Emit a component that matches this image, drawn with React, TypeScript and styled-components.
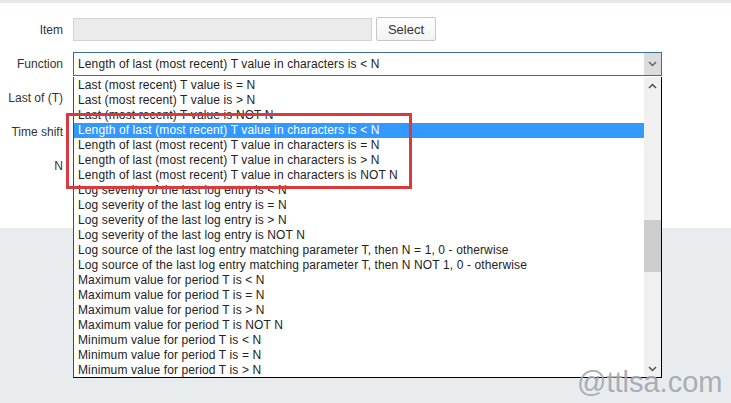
import React from "react";
import styled, { createGlobalStyle } from "styled-components";

const Global = createGlobalStyle`
  html, body { margin: 0; padding: 0; }
  body {
    background: #e9ecef;
    font-family: "Liberation Sans", Arial, sans-serif;
    font-size: 12px;
    color: #333;
  }
`;

const Page = styled.div`
  position: relative;
  width: 731px;
  height: 403px;
  overflow: hidden;
  display: flex;
  flex-direction: column;
`;

const TopStrip = styled.div`
  height: 3px;
  background: #e6e7e8;
`;

const Panel = styled.div`
  height: 225px;
  background: #fff;
  padding-top: 15px;
  box-sizing: border-box;
`;

const Form = styled.div`
  position: relative;
  display: grid;
  grid-template-columns: 63px 1fr;
  grid-auto-rows: 24px;
  column-gap: 10px;
  row-gap: 10px;
`;

const Label = styled.div`
  display: flex;
  align-items: center;
  justify-content: flex-end;
  font-size: 12px;
  color: #333;
`;

const Field = styled.div`
  display: flex;
  align-items: stretch;
  gap: 4px;
`;

const ItemInput = styled.div`
  width: 299px;
  height: 23px;
  box-sizing: border-box;
  background: #ebebeb;
  border: 1px solid #d2d2d2;
`;

const Button = styled.button`
  width: 60px;
  height: 24px;
  box-sizing: border-box;
  background: linear-gradient(#fdfdfd, #f3f3f3);
  border: 1px solid #c6c6c6;
  border-radius: 2px;
  font-family: "Liberation Sans", Arial, sans-serif;
  font-size: 13px;
  color: #333;
  padding: 0;
  margin-top: -1px;
`;

const SelectBox = styled.div`
  width: 589px;
  height: 24px;
  box-sizing: border-box;
  border: 1px solid #3d6f8f;
  display: flex;
  align-items: stretch;
  background: #fff;
`;

const SelectText = styled.div`
  flex: 1;
  display: flex;
  align-items: center;
  padding-left: 4px;
  font-size: 12px;
  letter-spacing: 0.12px;
  color: #222;
  white-space: nowrap;
`;

const ArrowBox = styled.div`
  width: 17px;
  background: #dcdcdc;
  display: flex;
  align-items: center;
  justify-content: center;
`;

const Dropdown = styled.div`
  position: absolute;
  left: 73px;
  top: 59px;
  width: 589px;
  height: 301px;
  box-sizing: border-box;
  background: #fff;
  border-left: 1px solid #4a4a4a;
  border-right: 1px solid #000;
  border-bottom: 1px solid #000;
  display: grid;
  grid-template-columns: 1fr 17px;
  padding-top: 1px;
`;

const Options = styled.div`
  display: flex;
  flex-direction: column;
  overflow: hidden;
`;

const Option = styled.div<{ $active?: boolean }>`
  height: 15px;
  line-height: 15px;
  padding-left: 4px;
  font-size: 12px;
  letter-spacing: 0.12px;
  white-space: nowrap;
  flex-shrink: 0;
  color: ${(p) => (p.$active ? "#fff" : "#222")};
  background: ${(p) => (p.$active ? "#3399ff" : "transparent")};
`;

const Scrollbar = styled.div`
  display: flex;
  flex-direction: column;
  background: #f0f0f0;
  margin-top: -1px;
`;

const ScrollArrow = styled.div`
  height: 17px;
  display: flex;
  align-items: center;
  justify-content: center;
  flex-shrink: 0;
`;

const Track = styled.div`
  flex: 1;
  display: flex;
  flex-direction: column;
`;

const Thumb = styled.div`
  height: 52px;
  background: #cdcdcd;
`;

const Highlight = styled.div`
  position: absolute;
  left: 66px;
  top: 95px;
  width: 346px;
  height: 76px;
  box-sizing: border-box;
  border: 3px solid #d83a3d;
  pointer-events: none;
`;

const Watermark = styled.div`
  position: absolute;
  left: 577px;
  top: 368px;
  font-family: "Liberation Sans", Arial, sans-serif;
  font-size: 29px;
  line-height: 29px;
  color: #a2a7b0;
  opacity: 0.9;
  pointer-events: none;
`;

const Chevron = ({ up, color = "#555" }: { up?: boolean; color?: string }) => (
  <svg width="9" height="6" viewBox="0 0 9 6">
    <path
      d={up ? "M1 5 L4.5 1.5 L8 5" : "M1 1 L4.5 4.5 L8 1"}
      fill="none"
      stroke={color}
      strokeWidth="1.5"
    />
  </svg>
);

const options = [
  "Last (most recent) T value is = N",
  "Last (most recent) T value is > N",
  "Last (most recent) T value is NOT N",
  "Length of last (most recent) T value in characters is < N",
  "Length of last (most recent) T value in characters is = N",
  "Length of last (most recent) T value in characters is > N",
  "Length of last (most recent) T value in characters is NOT N",
  "Log severity of the last log entry is < N",
  "Log severity of the last log entry is = N",
  "Log severity of the last log entry is > N",
  "Log severity of the last log entry is NOT N",
  "Log source of the last log entry matching parameter T, then N = 1, 0 - otherwise",
  "Log source of the last log entry matching parameter T, then N NOT 1, 0 - otherwise",
  "Maximum value for period T is < N",
  "Maximum value for period T is = N",
  "Maximum value for period T is > N",
  "Maximum value for period T is NOT N",
  "Minimum value for period T is < N",
  "Minimum value for period T is = N",
  "Minimum value for period T is > N",
];

const activeIndex = 3;
const thumbOffset = 126;

export default function App() {
  return (
    <>
      <Global />
      <Page>
        <TopStrip />
        <Panel>
          <Form>
            <Label>Item</Label>
            <Field>
              <ItemInput />
              <Button>Select</Button>
            </Field>
            <Label>Function</Label>
            <Field>
              <SelectBox>
                <SelectText>{options[activeIndex]}</SelectText>
                <ArrowBox>
                  <Chevron color="#666" />
                </ArrowBox>
              </SelectBox>
            </Field>
            <Label>Last of (T)</Label>
            <Field />
            <Label>Time shift</Label>
            <Field />
            <Label>N</Label>
            <Field />
            <Dropdown>
              <Options>
                {options.map((o, i) => (
                  <Option key={o} $active={i === activeIndex}>
                    {o}
                  </Option>
                ))}
              </Options>
              <Scrollbar>
                <ScrollArrow>
                  <Chevron up color="#505050" />
                </ScrollArrow>
                <Track>
                  <Thumb style={{ marginTop: thumbOffset }} />
                </Track>
                <ScrollArrow>
                  <Chevron color="#505050" />
                </ScrollArrow>
              </Scrollbar>
            </Dropdown>
            <Highlight />
          </Form>
        </Panel>
        <Watermark>@ttlsa.com</Watermark>
      </Page>
    </>
  );
}
